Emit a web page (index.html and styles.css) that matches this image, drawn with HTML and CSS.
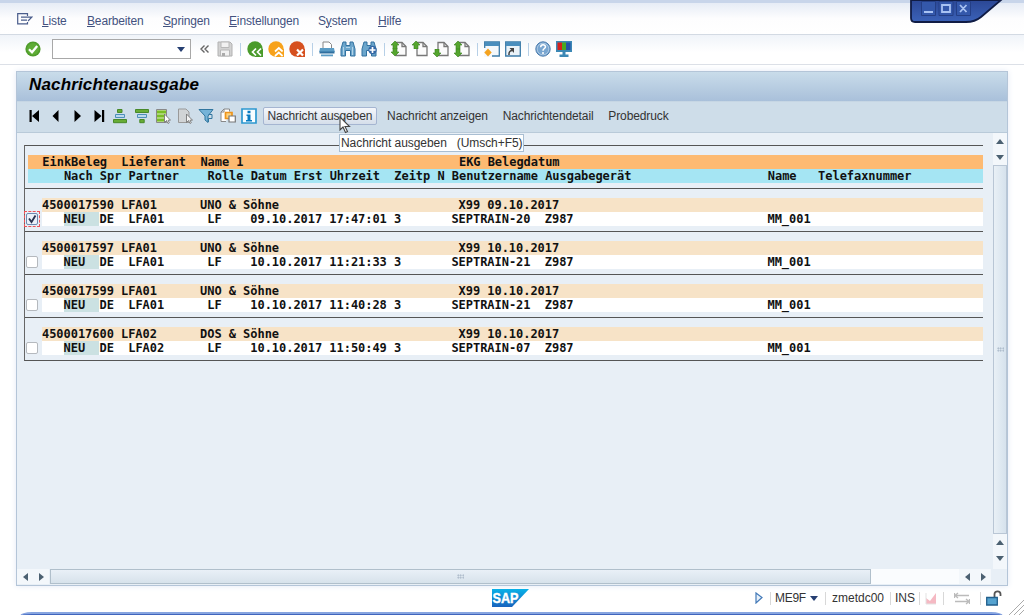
FILE: index.html
```
<!DOCTYPE html>
<html lang="de">
    <head>
        <meta charset="utf-8">
        <title>Nachrichtenausgabe</title>
        <link rel="stylesheet" href="styles.css">
    </head>

    <body>
        <svg class="defs">
            <symbol id="page" viewBox="0 0 16 16">
                <path d="M5 1.5h6l4 4v9H5z" fill="#fbfbfb" stroke="#777" stroke-width="1.3"/>
                <path d="M11 1.5v4h4" fill="none" stroke="#777" stroke-width="1.3"/>
            </symbol>
            <symbol id="up" viewBox="0 0 8 8"><path d="M4 0l4 4H6v4H2V4H0z" fill="#55a52e" stroke="#377f1d" stroke-width=".6"/></symbol>
            <symbol id="down" viewBox="0 0 8 8"><path d="M4 8L0 4h2V0h4v4h2z" fill="#55a52e" stroke="#377f1d" stroke-width=".6"/></symbol>
        </svg>

        <div class="menuBar">
            <svg class="menuIcon" width="16" height="12" viewBox="0 0 16 12"><path d="M10.500 3V.7H.7v10.200h9.800V9M4 4.200h6.500M4 7.200h6M9 4.200h5.800L11 8" fill="none" stroke="#4a5d8c" stroke-width="1.200"/></svg>
            <span class="m1"><u>L</u>iste</span>
            <span class="m2"><u>B</u>earbeiten</span>
            <span class="m3"><u>S</u>pringen</span>
            <span class="m4"><u>E</u>instellungen</span>
            <span class="m5">S<u>y</u>stem</span>
            <span class="m6"><u>H</u>ilfe</span>
        </div>

        <div class="toolBar">
            <svg class="icon" viewBox="0 0 16 16"><circle cx="8" cy="8" r="7.600" fill="#4f9c2b"/><circle cx="8" cy="8" r="6" fill="#5eac35"/><path d="M4 8.200l3 3 5.200-6.200" fill="none" stroke="#fff" stroke-width="2.300"/></svg>
            <div class="commandField"><i class="arrowDown"></i></div>
            <svg class="collapse" width="17" height="16" viewBox="0 0 17 16"><path d="M8.500 4.500L5 8l3.500 3.500M12.500 4.500L9 8l3.500 3.500" fill="none" stroke="#666" stroke-width="1.400"/></svg>
            <svg class="icon" viewBox="0 0 16 16"><path d="M1 1h12l2 2v12H1z" fill="#d2d2d2" stroke="#b2b2b2"/><path d="M4 1h8v5.500H4zM3.500 9h9v6h-9z" fill="#f1f1f1" stroke="#b8b8b8"/><path d="M5 12h3v3H5z" fill="#aaa"/></svg>
            <i class="sep"></i>
            <svg class="icon" viewBox="0 0 16 16"><circle cx="8" cy="8" r="7.700" fill="#4a9b2b"/><path d="M8 8h8v8H8z" fill="#4a9b2b"/><path d="M9 7.500L5.500 11 9 14.500M14 7.500L10.500 11l3.500 3.500" fill="none" stroke="#fff" stroke-width="1.700"/></svg>
            <svg class="icon" viewBox="0 0 16 16"><circle cx="8" cy="8" r="7.700" fill="#f7a21b"/><path d="M8 8h8v8H8z" fill="#f7a21b"/><path d="M7 10.500L10.800 7l3.800 3.500M7 15l3.800-3.500 3.800 3.500" fill="none" stroke="#fff" stroke-width="1.700"/></svg>
            <svg class="icon" viewBox="0 0 16 16"><circle cx="8" cy="8" r="7.700" fill="#d6501f"/><path d="M8 8h8v8H8z" fill="#d6501f"/><path d="M8 8.500l6 6M14 8.500l-6 6" stroke="#fff" stroke-width="2.200"/></svg>
            <i class="sep"></i>
            <svg class="icon" viewBox="0 0 16 16"><path d="M4 8V1h6l2.500 2.500V8" fill="#fff" stroke="#888"/><path d="M1 7h14l.8 4H.2z" fill="#5b9cc5"/><path d="M.5 10.500h15v2H.5z" fill="#2f6f9f"/><path d="M2 13.500h12v1.800H2z" fill="#5b9cc5"/></svg>
            <svg class="icon" viewBox="0 0 16 16"><path d="M3 1h3v3.500h4V1h3L15 8v7h-4.500V9.500h-5V15H1V8z" fill="#6ca6cc" stroke="#32719f"/><path d="M3.500 6v8M12.500 6v8M6 6.500h4" stroke="#b4d4e8"/></svg>
            <svg class="icon" viewBox="0 0 16 16"><path d="M3 1h3v3.500h4V1h3L15 8v7h-4.500V9.500h-5V15H1V8z" fill="#6ca6cc" stroke="#32719f"/><circle cx="11.500" cy="9" r="4.200" fill="#3367a5"/><path d="M11.500 6v6M8.500 9h6" stroke="#fff" stroke-width="1.700"/></svg>
            <i class="sep"></i>
            <svg class="icon" viewBox="0 0 16 16"><use href="#page"/><use href="#up" width="8" height="8"/><use href="#down" y="7" width="8" height="8"/></svg>
            <svg class="icon" viewBox="0 0 16 16"><use href="#page"/><use href="#up" width="8" height="8"/></svg>
            <svg class="icon" viewBox="0 0 16 16"><use href="#page"/><use href="#down" y="8" width="8" height="8"/></svg>
            <svg class="icon" viewBox="0 0 16 16"><use href="#page"/><use href="#up" width="8" height="8"/><use href="#down" y="8" width="8" height="8"/></svg>
            <i class="sep"></i>
            <svg class="icon" viewBox="0 0 16 16"><path d="M.7 1h14.600v14H.7z" fill="#f4f8fb" stroke="#3c7ba8" stroke-width="1.300"/><path d="M1 1h14v4H1z" fill="#4a8ebd"/><path d="M0 7h8v9H0z" fill="#f6f9fc"/><path d="M4 7.500L7.700 11.500 4 15.500.3 11.500z" fill="#f5a31f"/></svg>
            <svg class="icon" viewBox="0 0 16 16"><path d="M.7 1h14.600v14H.7z" fill="#eaf2f8" stroke="#3c7ba8" stroke-width="1.300"/><path d="M1 1h14v4H1z" fill="#4a8ebd"/><path d="M4 14c-.3-3 1-4.500 3.500-4.500" fill="none" stroke="#444" stroke-width="1.500"/><path d="M4.500 7H9v5z" fill="#444"/></svg>
            <i class="sep"></i>
            <svg class="icon" viewBox="0 0 16 16"><circle cx="8" cy="8" r="7.200" fill="#79a6d0" stroke="#4c7cad"/><circle cx="8" cy="8" r="5.800" fill="none" stroke="#bdd4ea" stroke-width=".7"/><path d="M5.700 6.300c0-3.400 4.800-3 4.800-.5C10.500 7.600 8 7.500 8 9.800" fill="none" stroke="#fff" stroke-width="1.500"/><circle cx="8" cy="12" r="1" fill="#fff"/></svg>
            <svg class="icon" viewBox="0 0 16 16"><path d="M0 0h16v11H0zM6.500 11h3v2.500h3V16h-9v-2.500h3z" fill="#3c88b5"/><path d="M1.500 1.500h4.500v7.500H1.500z" fill="#d5201c"/><path d="M6 1.500h4v7.500H6z" fill="#4aa823"/><path d="M10 1.500h4.500v7.500H10z" fill="#2452a8"/></svg>
        </div>

        <div class="sapWindow">
            <div class="titleBar">Nachrichtenausgabe</div>

            <div class="appToolBar">
                <svg class="icon" viewBox="0 0 16 16"><path d="M3.500 2h2.200v12H3.500zM13 2v12L6 8z"/></svg>
                <svg class="icon" viewBox="0 0 16 16"><path d="M10.500 2v12l-6-6z"/></svg>
                <svg class="icon" viewBox="0 0 16 16"><path d="M5.500 2v12l6.500-6z"/></svg>
                <svg class="icon" viewBox="0 0 16 16"><path d="M3.500 2v12l7-6zM11 2h2.200v12H11z"/></svg>
                <svg class="icon" viewBox="0 0 16 16"><path d="M5.500 1.500h4.500v3H5.500zM1.500 11.500h13v3.200h-13z" fill="#67ac35" stroke="#48892a"/><path d="M3.500 6.500h9v3h-9z" fill="#bcd9ec" stroke="#4d8fba"/></svg>
                <svg class="icon" viewBox="0 0 16 16"><path d="M1.500 1.500h13v3h-13zM5.800 11.500h4.400v3.200H5.800z" fill="#67ac35" stroke="#48892a"/><path d="M3.500 6.500h9v3h-9z" fill="#bcd9ec" stroke="#4d8fba"/></svg>
                <svg class="icon" viewBox="0 0 16 16"><path d="M1.500 1.500h10v13h-10z" fill="#dcebc5" stroke="#888"/><path d="M2 2.500h9v3H2zM2 6.500h7v3H2zM2 10.500h7v3H2z" fill="#7abd27"/><path d="M9.500 6v8.500l2-2 1.500 3 1.300-.8-1.300-2.500h2.500z" fill="#fff" stroke="#777" stroke-width=".9"/></svg>
                <svg class="icon" viewBox="0 0 16 16"><path d="M1.500 1h7.500l3 3v10.500H1.500z" fill="#d1d4d6" stroke="#999"/><path d="M9.500 6v8.500l2-2 1.500 3 1.300-.8-1.300-2.500h2.500z" fill="#f3f3f3" stroke="#777" stroke-width=".9"/></svg>
                <svg class="icon" viewBox="0 0 16 16"><path d="M1 1.500h14L10 8v6.500L7 12V8z" fill="#75b3d8" stroke="#31769f"/><path d="M10.500 6.500h3.500v4h-3.500v3.500" fill="none" stroke="#31769f"/></svg>
                <svg class="icon" viewBox="0 0 16 16"><path d="M9.500 3.500V1H4L1 4v9.500h5" fill="#fff" stroke="#888"/><path d="M1 4h3V1" fill="none" stroke="#888"/><path d="M5.500 4.500h6.500v6H5.500z" fill="#ffd27a" stroke="#ed941c" stroke-width="1.700"/><path d="M9 8h6.300v6H9z" fill="#fff" stroke="#777" stroke-width="1.200"/></svg>
                <svg class="icon" viewBox="0 0 16 16"><path d="M1 1h14v14H1z" fill="#f8fdff" stroke="#2d98d0" stroke-width="1.700"/><path d="M6.500 2.800h3v2.500h-3zM5.500 6.500h4V12H11v1.500H5V12h1.500V8h-1z" fill="#087bc1"/></svg>
                <button class="active">Nachricht ausgeben</button>
                <button>Nachricht anzeigen</button>
                <button>Nachrichtendetail</button>
                <button>Probedruck</button>
            </div>

            <div class="content">
                <div class="list">
                    <div class="group head">
                        <pre class="orange">  EinkBeleg  Lieferant  Name 1                              EKG Belegdatum</pre>
                        <pre class="cyan">     Nach Spr Partner    Rolle Datum Erst Uhrzeit  Zeitp N Benutzername Ausgabegerät                   Name   Telefaxnummer</pre>
                    </div>
                    <div class="group">
                        <pre class="doc">4500017590 LFA01      UNO &amp; Söhne                         X99 09.10.2017</pre>
                        <pre class="msg"><i class="check on"><svg width="12" height="12" viewBox="0 0 12 12"><path d="M3 5.500l2.500 3.500L9.500 2.500" fill="none" stroke="#29334f" stroke-width="1.800"/></svg></i>   <b>NEU  </b>DE  LFA01      LF    09.10.2017 17:47:01 3       SEPTRAIN-20  Z987                           MM_001</pre>
                    </div>
                    <div class="group">
                        <pre class="doc">4500017597 LFA01      UNO &amp; Söhne                         X99 10.10.2017</pre>
                        <pre class="msg"><i class="check"></i>   <b>NEU  </b>DE  LFA01      LF    10.10.2017 11:21:33 3       SEPTRAIN-21  Z987                           MM_001</pre>
                    </div>
                    <div class="group">
                        <pre class="doc">4500017599 LFA01      UNO &amp; Söhne                         X99 10.10.2017</pre>
                        <pre class="msg"><i class="check"></i>   <b>NEU  </b>DE  LFA01      LF    10.10.2017 11:40:28 3       SEPTRAIN-21  Z987                           MM_001</pre>
                    </div>
                    <div class="group">
                        <pre class="doc">4500017600 LFA02      DOS &amp; Söhne                         X99 10.10.2017</pre>
                        <pre class="msg"><i class="check"></i>   <b>NEU  </b>DE  LFA02      LF    10.10.2017 11:50:49 3       SEPTRAIN-07  Z987                           MM_001</pre>
                    </div>
                </div>
                <div class="scrollV">
                    <span><i class="tri up"></i></span>
                    <span><i class="tri down"></i></span>
                    <div class="thumb"><i class="dots"></i></div>
                    <span><i class="tri up"></i></span>
                    <span><i class="tri down"></i></span>
                </div>
            </div>

            <div class="scrollH">
                <span><i class="tri left"></i></span>
                <span><i class="tri right"></i></span>
                <div class="thumb"><i class="dots"></i></div>
                <div class="track"></div>
                <span><i class="tri left"></i></span>
                <span><i class="tri right"></i></span>
                <div class="corner"></div>
            </div>
        </div>

        <div class="statusBar">
            <svg class="logo" width="38" height="18" viewBox="0 0 38 18">
                <defs><linearGradient id="sap" x2="0" y2="1"><stop stop-color="#08b1e8"/><stop offset="1" stop-color="#1863bd"/></linearGradient></defs>
                <path d="M0 0h37L20 18H0z" fill="url(#sap)"/>
                <text x="0.500" y="14" textLength="26" lengthAdjust="spacingAndGlyphs">SAP</text>
            </svg>
            <div class="status">
                <svg width="8" height="12" viewBox="0 0 8 12"><path d="M1 1l6 4.500-6 5.500z" fill="#e8f1fa" stroke="#4279b8" stroke-width="1.200"/></svg>
                <i class="line s1"></i>
                <span class="w1">ME9F</span><i class="arrowDown"></i>
                <i class="line s2"></i>
                <span class="w2">zmetdc00</span>
                <i class="line s3"></i>
                <span class="w3">INS</span>
                <i class="line s4"></i>
                <svg class="signal" width="12" height="13" viewBox="0 0 12 13"><path d="M1 12V6l4 3 6-8v11z" fill="#f5b9c3"/><path d="M1 1v11h10" fill="none" stroke="#e3e3e3"/></svg>
                <i class="line s5"></i>
                <svg class="swap" width="16" height="13" viewBox="0 0 16 13"><path d="M.5 1v5M0 3.500h15M4 1L1 3.500 4 6M15.500 7v5M1 9.500h14M12 7l3 2.500-3 2.500" fill="none" stroke="#bbb" stroke-width="1.300"/></svg>
                <i class="line s6"></i>
                <svg class="lock" width="16" height="16" viewBox="0 0 16 16"><path d="M8.500 8V4c0-3.500 6-3.500 6 0v2" fill="none" stroke="#555" stroke-width="1.800"/><path d="M.7 7.500h10.600v7.500H.7z" fill="#55a3d0" stroke="#225f8c" stroke-width="1.300"/></svg>
            </div>
        </div>
        <div class="bottomEdge"></div>

        <svg class="windowButtons" width="100" height="27" viewBox="0 0 100 27">
            <defs><linearGradient id="blue" x2="0" y2="1"><stop stop-color="#2b4795"/><stop offset="1" stop-color="#3b62b8"/></linearGradient></defs>
            <path d="M1 0v18q0 4 4 4h51q9 0 15-5L91 0z" fill="url(#blue)" stroke="#101c45" stroke-width="1.800"/>
            <path d="M11.500 1.500h14v14h-14zM29 1.500h14v14H29zM46.500 1.500h14v14h-14z" fill="#3458ab" stroke="#243f86"/>
            <path d="M14 12h9M32 5h8v7h-8zM31.500 5h9M50 5l6.500 7M56.500 5L50 12" fill="none" stroke="#a9c3f3" stroke-width="1.800"/>
        </svg>
        <svg class="grip" width="16" height="16" viewBox="0 0 16 16"><path d="M1 16L16 1M6 16L16 6M11 16l5-5" stroke="#aaa"/></svg>
        <div class="tooltip">Nachricht ausgeben &nbsp; (Umsch+F5)</div>
        <svg class="cursor" width="12" height="18" viewBox="0 0 12 18"><path d="M1 1v13l3-3 2.500 5.500 2-1L6 10.500h4.500z" fill="#fff" stroke="#444" stroke-width="1.100"/></svg>
    </body>
</html>
```
FILE: styles.css
```
* {
 box-sizing: border-box;
}
body {
 margin: 0;
 width: 1024px;
 height: 615px;
 overflow: hidden;
 position: relative;
 background: #fff;
 font-family: "Liberation Sans", Arial, sans-serif;
 font-size: 12px;
 color: #333;
}
i {
 font-style: normal;
}
svg {
 display: block;
 flex: none;
}
.defs {
 display: none;
}

.menuBar {
 height: 35px;
 display: flex;
 align-items: center;
 padding: 4px 0 0 17px;
 border-top: 3px solid #c8d5ea;
 border-bottom: 1px solid #d3dae3;
 background: linear-gradient(#e6ecf6, #fdfdfe 50%, #fff);
 color: #43527f;
}
.menuBar span {
 letter-spacing: -0.15px;
}
.menuIcon {
 margin: -3px 9px 0 0;
}
.m1 { width: 45px; }
.m2 { width: 76px; }
.m3 { width: 66px; }
.m4 { width: 89px; }
.m5 { width: 60px; }

.toolBar {
 height: 30px;
 display: flex;
 align-items: center;
 gap: 5px;
 padding: 0 25px 1px;
 border-bottom: 1px solid #dce0e7;
 background: linear-gradient(#f0f4f9, #fff 60%);
}
.icon {
 width: 16px;
 height: 16px;
}
.commandField {
 width: 139px;
 height: 20px;
 margin-left: 6px;
 padding-right: 5px;
 border: 1px solid #a8a8a8;
 background: #fff;
 display: flex;
 align-items: center;
 justify-content: flex-end;
}
.collapse {
 margin-right: -1px;
}
.arrowDown {
 border: 4.500px solid transparent;
 border-top: 5px solid #263f72;
 border-bottom: 0;
}
.sep {
 width: 4px;
 height: 13px;
 background: linear-gradient(#b7d0e7, #b7d0e7) center / 1px 100% no-repeat;
}

.sapWindow {
 width: 992px;
 height: 515px;
 margin: 6px 0 0 16px;
 border: 1px solid #b4c5d8;
 background: #e8eff6;
 box-shadow: 0 0 6px #e3e9f5;
}
.titleBar {
 height: 29px;
 padding-left: 12px;
 line-height: 26px;
 background: linear-gradient(#c9dcea, #a9c0da);
 color: #000;
 font-size: 17px;
 font-weight: bold;
 font-style: italic;
 letter-spacing: 0.160px;
}
.appToolBar {
 height: 32px;
 display: flex;
 align-items: center;
 gap: 5.500px;
 padding: 0 0 2px 9px;
 border-top: 1px solid #c6d6e4;
 border-bottom: 1px solid #b9cad9;
 background: #cedde9;
}
button {
 height: 18px;
 margin-right: -0.700px;
 padding: 0 4px;
 border: 1px solid transparent;
 background: none;
 font: 12px "Liberation Sans", Arial, sans-serif;
 letter-spacing: -0.110px;
 color: #333;
 white-space: nowrap;
}
button.active {
 border-color: #a5b5d1;
 border-radius: 2px;
 background: linear-gradient(#f5f7fb, #d5deea);
}

.content {
 height: 436px;
 display: flex;
 justify-content: space-between;
}
.list {
 width: 959px;
 height: 216px;
 margin: 12px 0 0 7px;
 border-left: 1px solid #666;
 border-bottom: 1px solid #555;
}
.group {
 height: 43px;
 padding: 9px 0 5px 17px;
 border-top: 1px solid #555;
}
.group.head {
 padding-left: 3px;
}
pre {
 margin: 0;
 height: 14px;
 line-height: 14px;
 font-family: "DejaVu Sans Mono", monospace;
 font-size: 12px;
 font-weight: bold;
 letter-spacing: -0.042px;
 color: #111;
 position: relative;
}
pre b {
 display: inline-block;
 height: 14px;
 vertical-align: top;
 background: #cbe1e2;
}
.orange { background: #fdba72; }
.cyan { background: #a5e5f3; }
.doc { background: #f7e3c7; }
.msg { background: #fff; }
.check {
 position: absolute;
 left: -16px;
 top: 1px;
 width: 12px;
 height: 12px;
 border: 1px solid #b5b9be;
 border-radius: 2px;
 background: #fff;
}
.check.on {
 border-color: #6d8ab2;
 background: #eaf1f9;
}
.check.on svg {
 margin: -1px;
}
.check.on::before {
 content: "";
 position: absolute;
 inset: -3px;
 border: 1px dashed #ec5358;
}

.scrollV {
 width: 14px;
 display: flex;
 flex-direction: column;
}
.scrollV span {
 height: 16px;
 display: grid;
 place-items: center;
 background: #f3f7fb;
}
.scrollV span:last-child {
 height: 19px;
 padding-bottom: 3px;
}
.thumb {
 display: grid;
 place-items: center;
}
.scrollV .thumb {
 flex: 1;
 border: 1px solid #b9c6d5;
 background: linear-gradient(90deg, #e9f0f6, #d6e2ed);
}
.dots {
 width: 7px;
 height: 5px;
 background: radial-gradient(circle, #9faec0 0.700px, transparent 1px) 0 0 / 2.500px 2.500px;
}
.tri {
 border: 4.500px solid transparent;
}
.tri.up {
 border-top: 0;
 border-bottom: 5px solid #4b6071;
}
.tri.down {
 border-bottom: 0;
 border-top: 5px solid #4b6071;
}
.tri.left {
 border-left: 0;
 border-right: 5px solid #4b6071;
}
.tri.right {
 border-right: 0;
 border-left: 5px solid #4b6071;
}
.scrollH {
 height: 15px;
 display: flex;
}
.scrollH span {
 width: 16px;
 display: grid;
 place-items: center;
 background: #f3f7fb;
}
.scrollH .thumb {
 width: 821px;
 margin-left: 1px;
 border: 1px solid #b0bfcb;
 background: linear-gradient(#e9f0f7, #d7e2eb);
}
.scrollH .track {
 width: 88px;
 background: #fafcfe;
}
.corner {
 flex: 1;
}

.statusBar {
 height: 26px;
 display: flex;
 align-items: flex-start;
 padding: 3px 0 0 492px;
}
.logo text {
 font: bold 15px "Liberation Sans", Arial, sans-serif;
 fill: #fff;
 stroke: #fff;
 stroke-width: 0.400px;
}
.status {
 margin: 2px 0 0 225px;
 height: 14px;
 display: flex;
 align-items: center;
}
.line {
 width: 1px;
 height: 13px;
 background: #d8d8d8;
}
.s1 { margin: 0 4px 0 7px; }
.s2 { margin: 0 6px 0 7px; }
.s3 { margin: 0 4px 0 5px; }
.s4 { margin: 0 5px 0 5px; }
.s5 { margin: 0 10px 0 6px; }
.s6 { margin: 0 5px 0 10px; }
.w1 { width: 35px; letter-spacing: -0.300px; }
.w2 { width: 53px; }
.w3 { width: 19px; }

.bottomEdge {
 height: 4px;
 margin: 0 21px 0 20px;
 border-top: 2px solid #87a5e0;
 border-radius: 12px 12px 0 0 / 4px 4px 0 0;
 background: #4065bd;
}
.windowButtons {
 position: absolute;
 left: 910px;
 top: 0;
}
.grip {
 position: absolute;
 right: 0;
 bottom: 0;
}
.tooltip {
 position: absolute;
 left: 339px;
 top: 134px;
 width: 185px;
 height: 18px;
 padding-left: 1px;
 border: 1px solid #a9bed2;
 background: #fff;
 line-height: 16px;
 letter-spacing: -0.050px;
 white-space: nowrap;
}
.cursor {
 position: absolute;
 left: 339px;
 top: 116px;
}
```
